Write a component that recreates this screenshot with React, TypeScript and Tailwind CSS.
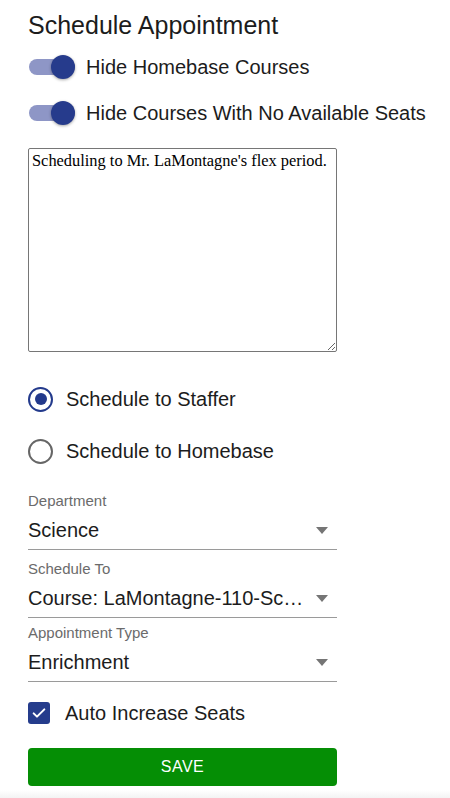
import React, { useState } from 'react';

const font = { fontFamily: '"Liberation Sans", Arial, sans-serif' };

const Toggle = ({ label, on, onClick }: { label: string; on: boolean; onClick: () => void }) => (
  <div className="flex h-[32px] items-center whitespace-nowrap" onClick={onClick}>
    <div className="relative ml-[1px] h-[16px] w-[46px] shrink-0 rounded-full bg-[#8e96c6]">
      <div
        className={`absolute top-[-4px] h-[24px] w-[24px] rounded-full bg-[#263b8c] shadow-[0_1px_3px_rgba(0,0,0,0.35)] ${
          on ? 'left-[22px]' : 'left-[-2px]'
        }`}
      />
    </div>
    <span className="ml-[11px] text-[20px] text-[#1c1c1c]">{label}</span>
  </div>
);

const Radio = ({ label, checked, onClick }: { label: string; checked: boolean; onClick: () => void }) => (
  <div className="flex h-[40px] items-center" onClick={onClick}>
    <div
      className={`flex h-[25px] w-[25px] items-center justify-center rounded-full border-[2.5px] ${
        checked ? 'border-[#233a8c]' : 'border-[#666666]'
      }`}
    >
      {checked && <div className="h-[12px] w-[12px] rounded-full bg-[#233a8c]" />}
    </div>
    <span className="ml-[13px] text-[20px] text-[#1c1c1c]">{label}</span>
  </div>
);

const Select = ({ label, value, gap }: { label: string; value: string; gap: string }) => (
  <div className={`${gap} w-[309px]`}>
    <div className="h-[20px] text-[15px] leading-[20px] text-[#6b6b6b]">{label}</div>
    <div className="flex h-[39px] items-center border-b border-[#9a9a9a]">
      <span className="flex-1 truncate text-[20px] text-[#1c1c1c]">{value}</span>
      <svg width="12" height="7" viewBox="0 0 12 7" className="ml-[8px] mr-[9px] shrink-0">
        <path d="M0 0h12L6 7z" fill="#757575" />
      </svg>
    </div>
  </div>
);

export default function App() {
  const [hideHome, setHideHome] = useState(true);
  const [hideFull, setHideFull] = useState(true);
  const [target, setTarget] = useState('staffer');
  const [autoSeats, setAutoSeats] = useState(true);

  return (
    <div className="min-h-[798px] bg-white" style={font}>
      <div className="pl-[28px] pt-[10px]">
        <h1 className="text-[25px] leading-[30px] text-[#1c1c1c]">Schedule Appointment</h1>

        <div className="mt-[11px]">
          <Toggle label="Hide Homebase Courses" on={hideHome} onClick={() => setHideHome(!hideHome)} />
        </div>
        <div className="mt-[14px]">
          <Toggle label="Hide Courses With No Available Seats" on={hideFull} onClick={() => setHideFull(!hideFull)} />
        </div>

        <textarea
          className="mt-[19px] block h-[204px] w-[309px] rounded-[2px] border border-[#767676] px-[3px] py-[2px] text-[16.4px] leading-[20px] text-black outline-none"
          style={{ fontFamily: '"Liberation Serif", "Times New Roman", serif' }}
          defaultValue="Scheduling to Mr. LaMontagne's flex period."
        />

        <div className="mt-[27px]">
          <Radio label="Schedule to Staffer" checked={target === 'staffer'} onClick={() => setTarget('staffer')} />
        </div>
        <div className="mt-[12px]">
          <Radio label="Schedule to Homebase" checked={target === 'homebase'} onClick={() => setTarget('homebase')} />
        </div>

        <Select label="Department" value="Science" gap="mt-[20px]" />
        <Select label="Schedule To" value="Course: LaMontagne-110-Sc…" gap="mt-[9px]" />
        <Select label="Appointment Type" value="Enrichment" gap="mt-[5px]" />

        <div className="mt-[15px] flex h-[32px] items-center" onClick={() => setAutoSeats(!autoSeats)}>
          <div
            className={`flex h-[22px] w-[22px] items-center justify-center rounded-[3px] ${
              autoSeats ? 'bg-[#253c8c]' : 'border-2 border-[#666666]'
            }`}
          >
            {autoSeats && (
              <svg width="16" height="16" viewBox="0 0 24 24" fill="none">
                <path d="M4 12.5l5 5L20 6.5" stroke="white" strokeWidth="3" strokeLinecap="round" strokeLinejoin="round" />
              </svg>
            )}
          </div>
          <span className="ml-[15px] text-[20px] text-[#1c1c1c]">Auto Increase Seats</span>
        </div>

        <button className="mt-[19px] flex h-[38px] w-[309px] items-center justify-center rounded-[4px] bg-[#058e05] text-[16px] tracking-[0.5px] text-white">
          SAVE
        </button>
      </div>
      <div className="mt-[4px] h-[8px] bg-gradient-to-b from-white to-[#f3f3f3]" />
    </div>
  );
}
